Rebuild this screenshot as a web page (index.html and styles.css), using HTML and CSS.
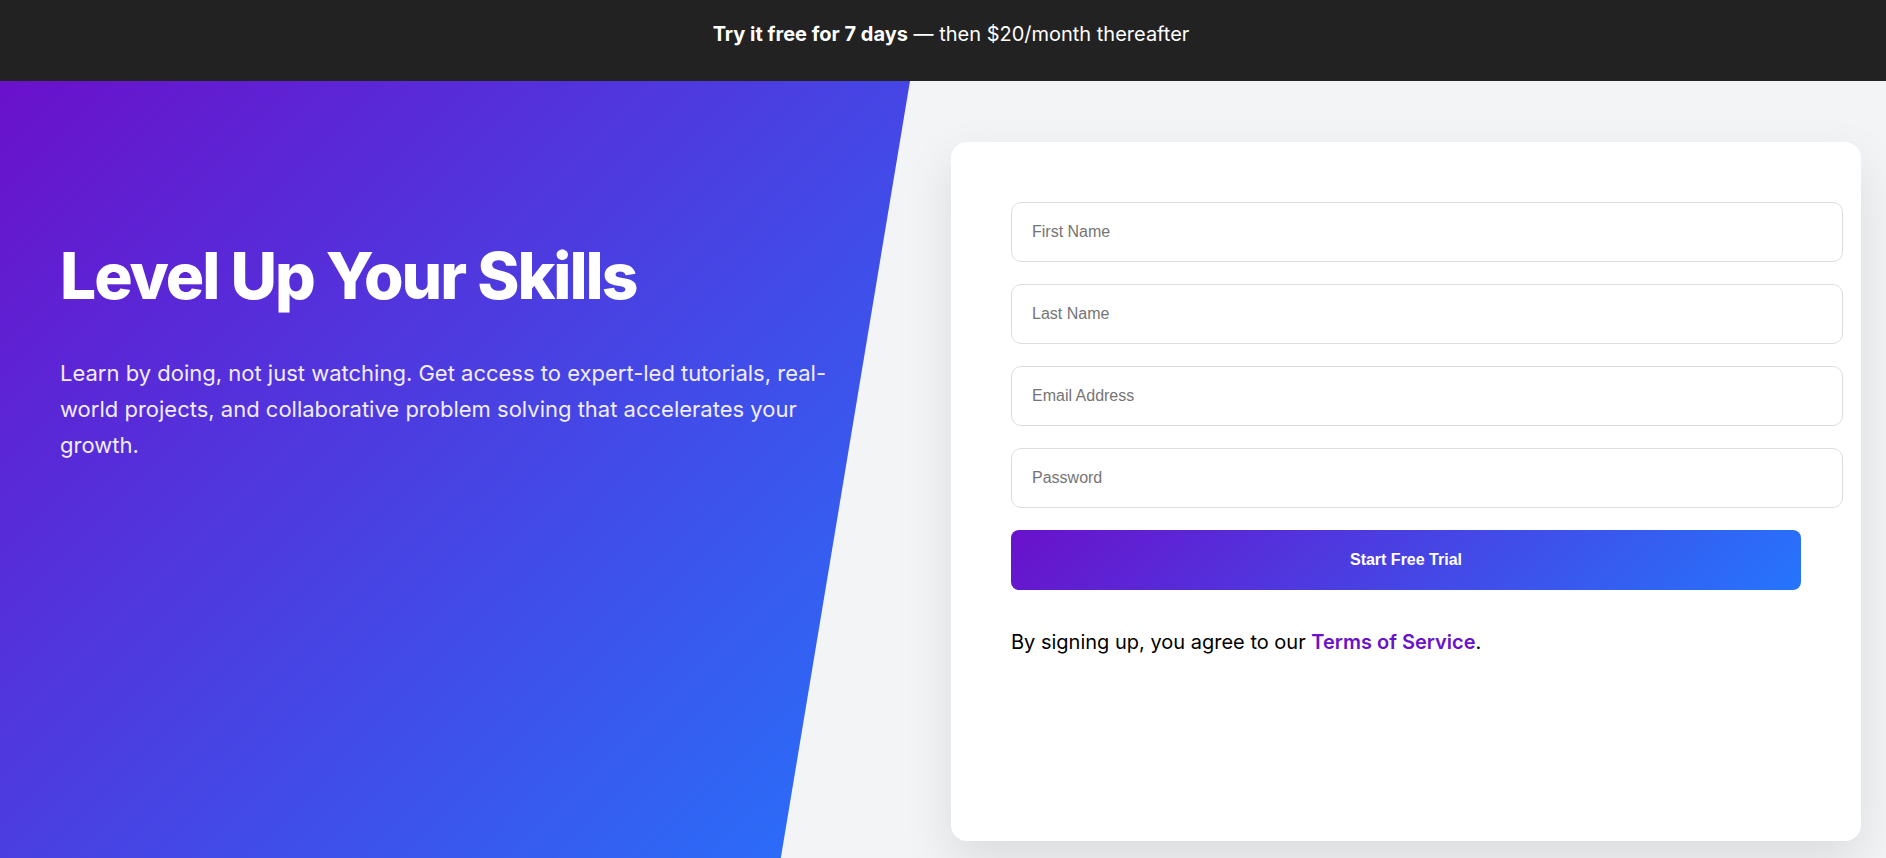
FILE: index.html
```html
<!DOCTYPE html>
<html lang="en">
<head>
  <meta charset="UTF-8">
  <meta name="viewport" content="width=device-width, initial-scale=1.0">
  <title>Level Up Your Skills</title>
  <link rel="stylesheet" href="styles.css">
</head>
<body>
  <div class="promo-bar">
    <strong>Try it free for 7 days</strong> — then $20/month thereafter
  </div>

  <main class="hero">
    <section class="hero-left">
      <h1>Level Up Your Skills</h1>
      <p>Learn by doing, not just watching. Get access to expert-led tutorials, real-world projects, and collaborative problem solving that accelerates your growth.</p>
    </section>

    <section class="hero-right">
      <div class="card">
        <form id="signupForm">
          <input type="text" name="firstName" placeholder="First Name">
          <input type="text" name="lastName" placeholder="Last Name">
          <input type="email" name="email" placeholder="Email Address">
          <input type="password" name="password" placeholder="Password">
          <button type="submit">Start Free Trial</button>
        </form>
        <p class="terms">By signing up, you agree to our <a href="#">Terms of Service</a>.</p>
      </div>
    </section>
  </main>
</body>
</html>
```

FILE: styles.css
```css
/* Base */
body {
  margin: 0;
  font-family: 'Inter', 'Noto Sans', sans-serif;
  background-color: #f3f4f6;
  color: #111;
  overflow: hidden;
}

/* Top promo bar */
.promo-bar {
  box-sizing: border-box;
  height: 81px;
  padding: 22px 0 0 16px;
  background-color: #222;
  color: #fff;
  font-size: 20px;
  line-height: 24px;
  text-align: center;
}
.promo-bar strong {
  font-weight: 700;
}

/* Hero layout */
.hero {
  display: flex;
  height: calc(100vh - 81px);
}

/* Left side with diagonal edge */
.hero-left {
  flex: 0 0 50%;
  box-sizing: border-box;
  padding: 157px 60px 0;
  background: linear-gradient(135deg, #6a11cb 0%, #2575fc 100%);
  clip-path: polygon(0 0, 96.5% 0, 82.8% 100%, 0 100%);
  color: #fff;
}
.hero-left h1 {
  margin: 0 0 40px;
  font-size: 64px;
  font-weight: 800;
  line-height: 1.2;
  letter-spacing: -2px;
}
.hero-left p {
  max-width: 800px;
  margin: 0;
  font-size: 22px;
  line-height: 36px;
  color: #f1ecff;
}

/* Right side */
.hero-right {
  flex: 1;
  display: flex;
  padding: 61px 25px 17px 8px;
}
.card {
  flex: 1;
  padding: 60px;
  background-color: #fff;
  border-radius: 16px;
  box-shadow: 0 20px 50px rgba(0, 0, 0, 0.1);
}

/* Form fields */
.card input {
  display: block;
  width: 100%;
  padding: 20px;
  margin: 0 0 22px;
  border: 1px solid #ddd;
  border-radius: 10px;
  font-family: 'Liberation Sans', Arial, sans-serif;
  font-size: 16px;
  line-height: 18px;
  color: #333;
}
.card input::placeholder {
  color: #757575;
}

.card button {
  display: block;
  width: 100%;
  padding: 21px 0;
  border: none;
  border-radius: 8px;
  background: linear-gradient(135deg, #6a11cb 0%, #2575fc 100%);
  color: #fff;
  font-family: 'Liberation Sans', Arial, sans-serif;
  font-size: 16px;
  font-weight: 700;
  line-height: 18px;
  cursor: pointer;
}

/* Terms line */
.terms {
  margin: 37px 0 0;
  font-size: 20px;
  line-height: 30px;
  color: #000;
}
.terms a {
  color: #6a11cb;
  font-weight: 600;
  text-decoration: none;
}
```
